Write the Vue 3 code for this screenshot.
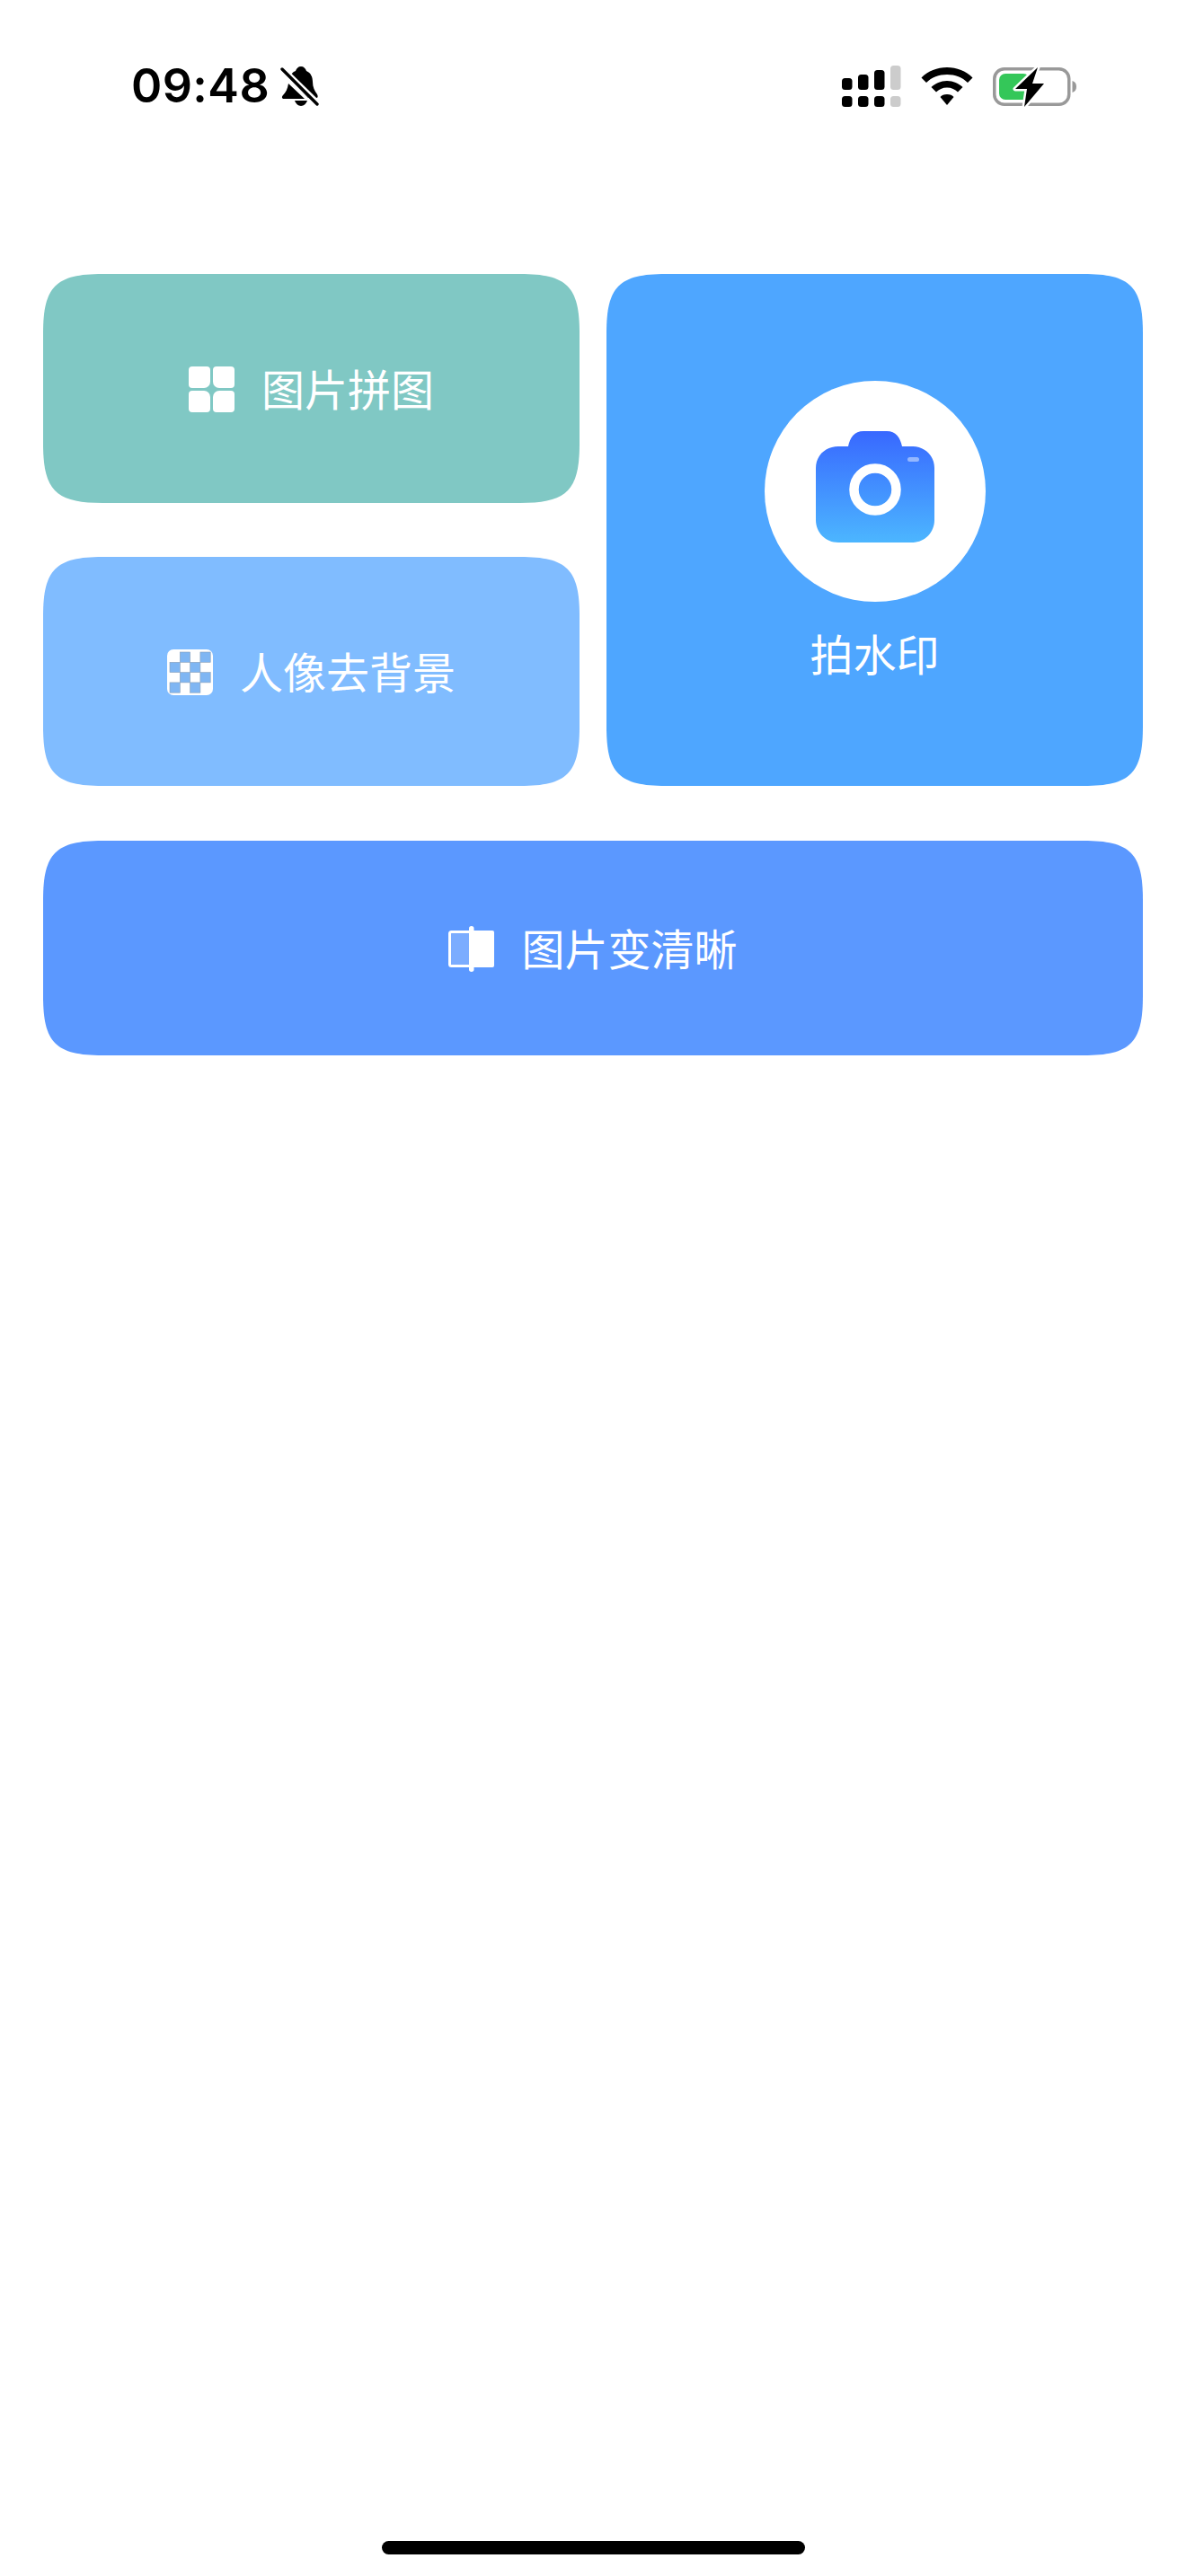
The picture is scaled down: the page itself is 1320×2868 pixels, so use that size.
<script setup>
const rows = [0, 1, 2, 3]
</script>

<template>
  <div class="page">
    <header class="status">
      <div class="status-left">
        <span class="time">09:48</span>
        <svg class="bell" width="44" height="46" viewBox="0 0 44 46">
          <path d="M23 1c3 0 5 2 6 5 5 2 7 7 7 12 0 6 2 10 5 14 1 2 1 4-1 4H31L10 14c1-4 4-7 7-8 1-3 3-5 6-5z" fill="#000"/>
          <path d="M9 20 27 37H4c-2 0-3-2-1-4 3-3 5-7 6-13z" fill="#000"/>
          <path d="M16 39h14c-1 3-4 6-7 6s-6-3-7-6z" fill="#000"/>
          <path d="M2 3 42 42" stroke="#fff" stroke-width="6"/>
          <path d="M2 4 41 43" stroke="#000" stroke-width="3.4" stroke-linecap="round"/>
        </svg>
      </div>
      <div class="status-right">
        <svg width="66" height="46" viewBox="0 0 66 46">
          <rect x="0" y="14" width="11.5" height="13" rx="3.5"/>
          <rect x="18" y="10" width="11.5" height="17" rx="3.5"/>
          <rect x="36" y="5" width="11.5" height="22" rx="3.5"/>
          <rect x="54" y="0" width="11.5" height="27" rx="3.5" fill="#ccc"/>
          <rect x="0" y="34" width="11.5" height="12" rx="3.5"/>
          <rect x="18" y="34" width="11.5" height="12" rx="3.5"/>
          <rect x="36" y="34" width="11.5" height="12" rx="3.5"/>
          <rect x="54" y="34" width="11.5" height="12" rx="3.5" fill="#ccc"/>
        </svg>
        <svg class="lower" width="58" height="42" viewBox="0 0 58 42">
          <path d="M29 0c11 0 21 4 28.500 11.500L52 17C46 11 38 8 29 8S12 11 6 17L.5 11.500C8 4 18 0 29 0z"/>
          <path d="M29 15c7 0 13 3 17.500 7L41 27.500c-3-3-7-5-12-5s-9 2-12 5L11.500 22C16 18 22 15 29 15z"/>
          <path d="M29 30c3.500 0 6 1 7.500 3L29 42 21.500 33c1.500-2 4-3 7.500-3z"/>
        </svg>
        <svg class="lower" width="94" height="46" viewBox="0 0 94 46">
          <rect x="1.750" y="1.750" width="83" height="39.500" rx="11" fill="none" stroke="#999" stroke-width="3.500"/>
          <path d="M88.500 15c3 1 4.500 3 4.500 6.500S91.500 27 88.500 28z" fill="#999"/>
          <rect x="7" y="7" width="34" height="29" rx="7" fill="#34C759"/>
          <path d="M50 0 25 24H38L35 44 57 18H44z" fill="#000" stroke="#fff" stroke-width="5" stroke-linejoin="round" paint-order="stroke"/>
        </svg>
      </div>
    </header>

    <main class="grid">
      <button class="card puzzle">
        <svg class="icon" width="51" height="51" viewBox="0 0 51 51" fill="#fff">
          <path d="M4 0H20a4 4 0 0 1 4 4V17a7 7 0 0 1-7 7H4a4 4 0 0 1-4-4V4a4 4 0 0 1 4-4z"/>
          <path d="M31 0H47a4 4 0 0 1 4 4V20a4 4 0 0 1-4 4H34a7 7 0 0 1-7-7V4a4 4 0 0 1 4-4z"/>
          <path d="M4 27H17a7 7 0 0 1 7 7V47a4 4 0 0 1-4 4H4a4 4 0 0 1-4-4V31a4 4 0 0 1 4-4z"/>
          <path d="M34 27H47a4 4 0 0 1 4 4V47a4 4 0 0 1-4 4H31a4 4 0 0 1-4-4V34a7 7 0 0 1 7-7z"/>
        </svg>
        <span class="label">图片拼图</span>
      </button>

      <button class="card camera">
        <span class="disc">
          <svg width="132" height="124" viewBox="0 0 132 124">
            <defs>
              <linearGradient id="cam" x1="0" y1="0" x2="0" y2="1">
                <stop offset="0" stop-color="#3868ff"/>
                <stop offset="1" stop-color="#4cb6ff"/>
              </linearGradient>
            </defs>
            <path d="M36 17c2-10 7-17 17-17h26c10 0 15 7 17 17h11c14 0 25 10 25 24v58c0 14-11 25-25 25H25C11 124 0 113 0 99V41c0-14 11-24 25-24z" fill="url(#cam)"/>
            <circle cx="66" cy="65" r="23.500" fill="none" stroke="#fff" stroke-width="10.500"/>
            <rect x="102" y="29" width="13" height="5" rx="2.500" fill="#fff" fill-opacity=".45"/>
          </svg>
        </span>
        <span class="label">拍水印</span>
      </button>

      <button class="card portrait">
        <svg class="icon" width="51" height="51" viewBox="0 0 51 51">
          <rect width="51" height="51" rx="7" fill="#fff"/>
          <g v-for="r in rows" :key="r">
            <template v-for="c in rows" :key="c">
              <rect v-if="(r + c) % 2 === 1" :x="3 + c * 11.300" :y="3 + r * 11.300" width="11.300" height="11.300" fill="#7fb6f3" stroke="#8aa0b8" stroke-width=".6"/>
            </template>
          </g>
        </svg>
        <span class="label">人像去背景</span>
      </button>

      <button class="card sharpen">
        <svg class="icon" width="51" height="51" viewBox="0 0 51 51">
          <rect x="1.500" y="6.500" width="24" height="38" rx="2" fill="#fff" fill-opacity=".2" stroke="#fff" stroke-width="3"/>
          <rect x="26" y="5" width="25" height="41" rx="2" fill="#fff"/>
          <rect x="23" y="0" width="5.500" height="51" rx="2.750" fill="#fff"/>
        </svg>
        <span class="label">图片变清晰</span>
      </button>
    </main>

    <div class="home-bar"></div>
  </div>
</template>

<style>
html, body { margin: 0; background: #fff; }
</style>

<style scoped>
.page {
  position: relative;
  width: 1320px;
  height: 2868px;
  background: #fff;
  overflow: hidden;
  font-family: "Noto Sans CJK SC", "Noto Sans", sans-serif;
}
.status {
  height: 146px;
  padding: 73px 121px 0 146px;
  box-sizing: border-box;
  display: flex;
  justify-content: space-between;
  align-items: flex-start;
}
.status-left { display: flex; align-items: center; gap: 12px; }
.time {
  font-family: Inter, "Liberation Sans", sans-serif;
  font-weight: 600;
  font-size: 52px;
  line-height: 46px;
  letter-spacing: .4px;
  color: #000;
}
.status-right { display: flex; align-items: flex-start; gap: 22px; }
.status-right svg { display: block; }
.status-right .lower { margin-top: 2px; }
.grid {
  display: grid;
  grid-template-columns: 597px 597px;
  grid-template-rows: 255px 255px 240px;
  column-gap: 30px;
  row-gap: 60px;
  margin: 159px 48px 0;
}
.card {
  border: 0;
  padding: 0;
  margin: 0;
  display: flex;
  align-items: center;
  justify-content: center;
  gap: 30px;
  color: #fff;
  font: inherit;
  clip-path: path("M0 66C0 14 14 0 66 0H531C583 0 597 14 597 66V189C597 241 583 255 531 255H66C14 255 0 241 0 189Z");
}
.label { font-size: 48px; line-height: 60px; font-weight: 400; margin-bottom: 4px; }
.icon { display: block; flex: none; margin-top: 2px; }
.puzzle { background: #80c8c4; }
.portrait { background: #80bcff; }
.camera {
  grid-column: 2;
  grid-row: 1 / span 2;
  flex-direction: column;
  gap: 26px;
  background: #4ea6ff;
  clip-path: path("M0 66C0 14 14 0 66 0H531C583 0 597 14 597 66V504C597 556 583 570 531 570H66C14 570 0 556 0 504Z");
}
.disc {
  width: 246px;
  height: 246px;
  box-sizing: border-box;
  margin-top: 4px;
  padding-bottom: 11px;
  border-radius: 50%;
  background: #fff;
  display: flex;
  align-items: center;
  justify-content: center;
}
.disc svg { display: block; }
.sharpen {
  grid-column: 1 / span 2;
  margin-top: 1px;
  background: #5b98ff;
  clip-path: path("M0 66C0 14 14 0 66 0H1158C1210 0 1224 14 1224 66V173C1224 225 1210 239 1158 239H66C14 239 0 225 0 173Z");
}
.home-bar {
  position: absolute;
  left: 425px;
  top: 2829px;
  width: 471px;
  height: 15px;
  border-radius: 8px;
  background: #000;
}
</style>
